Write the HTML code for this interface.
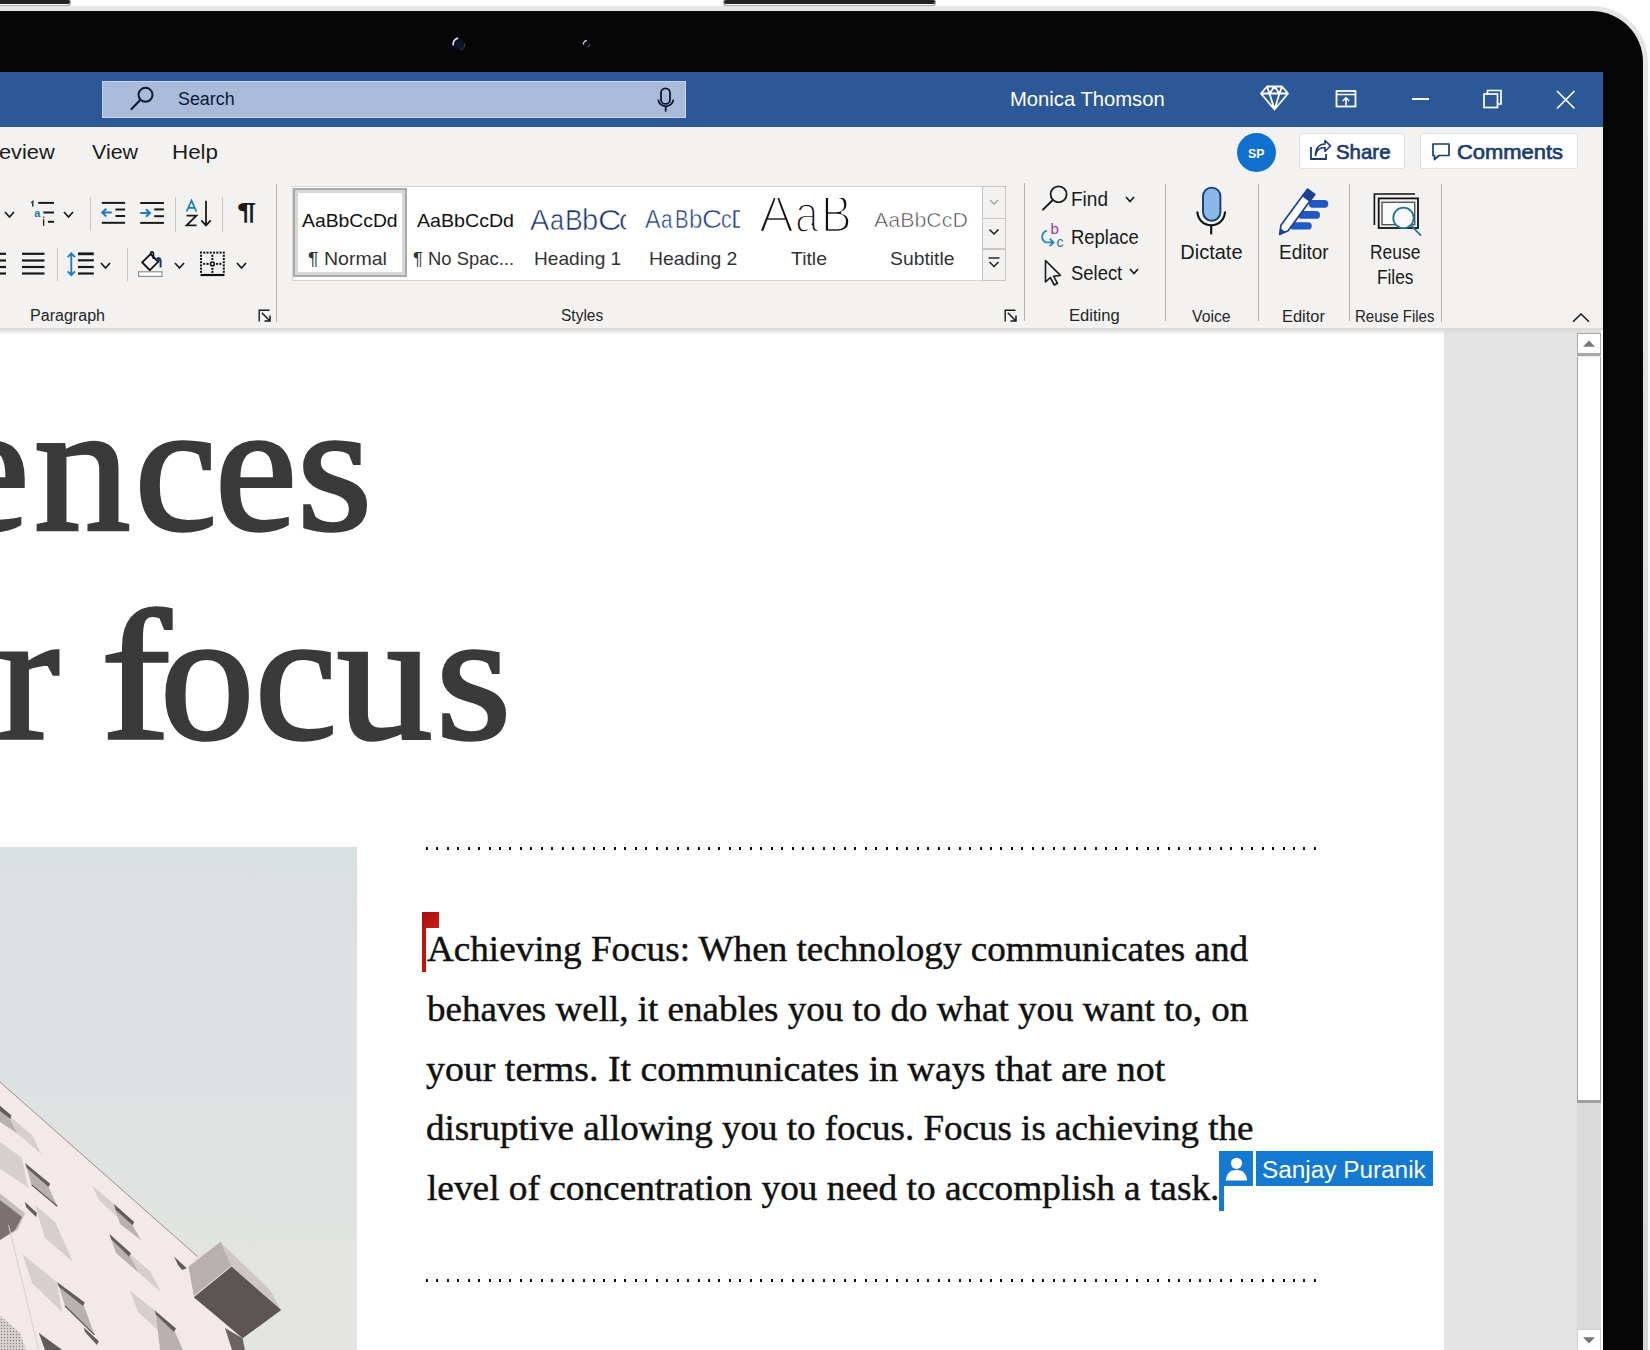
<!DOCTYPE html>
<html><head><meta charset="utf-8">
<style>
*{margin:0;padding:0;box-sizing:border-box}
html,body{width:1650px;height:1350px;overflow:hidden;background:#fff;position:relative;font-family:"Liberation Sans",sans-serif}
.a{position:absolute}
.t{position:absolute;white-space:nowrap;line-height:1}
svg{overflow:visible}
</style></head><body>
<div class="a" style="left:-5px;top:-1px;width:76px;height:7px;background:#222;border:1px solid #aaa;border-radius:0 3px 3px 0;box-shadow:inset 0 -1px 0 #fff"></div>
<div class="a" style="left:723px;top:-1px;width:213px;height:7px;background:#222;border:1px solid #aaa;border-radius:3px;box-shadow:inset 0 -1px 0 #fff"></div>
<div class="a" style="left:-60px;top:6px;width:1708px;height:1400px;background:linear-gradient(#e6e6e6,#d4d4d4);border-radius:0 56px 0 0"></div>
<div class="a" style="left:-60px;top:11px;width:1703px;height:1400px;background:#050505;border-radius:0 51px 0 0"></div>
<svg class="a" style="left:448px;top:33px;" width="22" height="22" viewBox="0 0 22 22"><circle cx="10.9" cy="10.9" r="6" fill="#0a0d1a"/><circle cx="11.5" cy="11.5" r="4" fill="#141a3a" opacity="0.6"/><path d="M5.3 12.5 A6 6 0 0 1 10.2 5.1" fill="none" stroke="#d8e8ff" stroke-width="1.6"/><path d="M16.8 10.5 A6 6 0 0 1 12 16.8" fill="none" stroke="#3a6a80" stroke-width="1" opacity="0.7"/></svg>
<svg class="a" style="left:580px;top:37px;" width="14" height="14" viewBox="0 0 14 14"><circle cx="6.6" cy="6.9" r="3.4" fill="#0a0d14"/><path d="M3.5 7.5 A3.3 3.3 0 0 1 6.8 3.6" fill="none" stroke="#e0e8f8" stroke-width="1.2"/><path d="M9.8 7 A3.3 3.3 0 0 1 7.5 10.2" fill="none" stroke="#607080" stroke-width="0.8"/></svg>
<div class="a" style="left:0px;top:72px;width:1603px;height:55px;background:#2c5898;"></div>
<div class="a" style="left:102px;top:81px;width:584px;height:37px;background:#a9bbd9;border:1px solid #c3d5f0"></div>
<svg class="a" style="left:128px;top:84px;" width="24" height="28" viewBox="0 0 24 28"><circle cx="17.5" cy="10.8" r="7" fill="none" stroke="#0d1a33" stroke-width="2"/><line x1="12.5" y1="15.8" x2="3.5" y2="25" stroke="#0d1a33" stroke-width="2.2" stroke-linecap="round"/></svg>
<div class="t" style="left:178.41px;top:90.46px;font-size:18px;font-family:'Liberation Sans',sans-serif;font-weight:400;color:#0c1a36;transform:scaleX(0.9927);transform-origin:0 0;">Search</div>
<svg class="a" style="left:655px;top:86px;" width="22" height="28" viewBox="0 0 22 28"><rect x="6" y="2.4" width="9" height="15.5" rx="4.5" fill="none" stroke="#0a1530" stroke-width="1.8"/><path d="M3.2 13.6 A7.6 7.6 0 0 0 18.3 13.6" fill="none" stroke="#0a1530" stroke-width="1.8"/><line x1="10.7" y1="21" x2="10.7" y2="25.6" stroke="#0a1530" stroke-width="1.8"/></svg>
<div class="t" style="left:1010.17px;top:88.32px;font-size:21px;font-family:'Liberation Sans',sans-serif;font-weight:400;color:#fff;transform:scaleX(0.9627);transform-origin:0 0;">Monica Thomson</div>
<svg class="a" style="left:1260px;top:85px;" width="30" height="26" viewBox="0 0 30 26"><path d="M7 1.5 H22 L28 8.5 L14.5 24.5 L1 8.5 Z M1 8.5 H28 M9.5 8.5 L14.5 24.5 L19.5 8.5 M7 1.5 L9.5 8.5 L14.5 1.5 L19.5 8.5 L22 1.5" fill="none" stroke="#fff" stroke-width="1.8" stroke-linejoin="round"/></svg>
<svg class="a" style="left:1334px;top:89px;" width="24" height="20" viewBox="0 0 24 20"><rect x="2.5" y="2" width="19" height="15.5" fill="none" stroke="#fff" stroke-width="1.8"/><line x1="2.5" y1="5.5" x2="21.5" y2="5.5" stroke="#fff" stroke-width="1.5"/><path d="M12 16.5 V9 M8.8 12 L12 8.8 L15.2 12" fill="none" stroke="#fff" stroke-width="1.6"/></svg>
<div class="a" style="left:1412px;top:98px;width:17px;height:2px;background:#fff;"></div>
<svg class="a" style="left:1482px;top:88px;" width="22" height="22" viewBox="0 0 22 22"><rect x="2" y="6" width="13.5" height="13.5" fill="none" stroke="#fff" stroke-width="1.7"/><path d="M5.5 6 V2.5 H19 V16 H15.5" fill="none" stroke="#fff" stroke-width="1.7"/></svg>
<svg class="a" style="left:1555px;top:89px;" width="22" height="22" viewBox="0 0 22 22"><path d="M2 2 L19.5 19.5 M19.5 2 L2 19.5" stroke="#fff" stroke-width="1.7"/></svg>
<div class="a" style="left:0px;top:127px;width:1603px;height:202px;background:#f3f2f1;"></div>
<div class="a" style="left:0px;top:328px;width:1603px;height:1.5px;background:#dadada;"></div>
<div class="t" style="left:-1.04px;top:141.32px;font-size:21px;font-family:'Liberation Sans',sans-serif;font-weight:400;color:#1b1b1b;transform:scaleX(1.0377);transform-origin:0 0;">eview</div>
<div class="t" style="left:91.60px;top:141.32px;font-size:21px;font-family:'Liberation Sans',sans-serif;font-weight:400;color:#1b1b1b;transform:scaleX(1.0200);transform-origin:0 0;">View</div>
<div class="t" style="left:171.67px;top:141.32px;font-size:21px;font-family:'Liberation Sans',sans-serif;font-weight:400;color:#1b1b1b;transform:scaleX(1.0659);transform-origin:0 0;">Help</div>
<div class="a" style="left:1237px;top:133px;width:39px;height:39px;border-radius:50%;background:#0f70cd"></div>
<div class="t" style="left:1247.75px;top:146.59px;font-size:13px;font-family:'Liberation Sans',sans-serif;font-weight:700;color:#fff;transform:scaleX(0.9500);transform-origin:0 0;">SP</div>
<div class="a" style="left:1298.5px;top:132.8px;width:106.5px;height:36.2px;background:#fff;border:1px solid #e1dfdd;border-radius:3px"></div>
<div class="a" style="left:1419.5px;top:132.8px;width:158px;height:36.2px;background:#fff;border:1px solid #e1dfdd;border-radius:3px"></div>
<svg class="a" style="left:1308px;top:139px;" width="24" height="22" viewBox="0 0 24 22"><path d="M3 8 V20 H18 V15" fill="none" stroke="#1c3d73" stroke-width="1.8"/><path d="M7.5 16.5 C8.5 10.5 12 8.5 17 8.5 V12.5 L22.5 6.8 L17 1.5 V5 C11 5 7.5 9.5 7.5 16.5 Z" fill="none" stroke="#1c3d73" stroke-width="1.6" stroke-linejoin="round"/></svg>
<div class="t" style="left:1335.93px;top:140.72px;font-size:21px;font-family:'Liberation Sans',sans-serif;font-weight:400;color:#1c3d73;transform:scaleX(0.9727);transform-origin:0 0;-webkit-text-stroke:0.7px #1c3d73;">Share</div>
<svg class="a" style="left:1430px;top:141px;" width="22" height="22" viewBox="0 0 22 22"><path d="M3 3 H19 V14.5 H9 L4.5 18.5 V14.5 H3 Z" fill="none" stroke="#1c3d73" stroke-width="1.7" stroke-linejoin="round"/></svg>
<div class="t" style="left:1457.15px;top:140.72px;font-size:21px;font-family:'Liberation Sans',sans-serif;font-weight:400;color:#1c3d73;transform:scaleX(1.0450);transform-origin:0 0;-webkit-text-stroke:0.7px #1c3d73;">Comments</div>
<svg class="a" style="left:3.0px;top:209.9px;" width="13" height="9" viewBox="0 0 13 9"><path d="M2 2 L6.5 7 L11 2" fill="none" stroke="#1a1a1a" stroke-width="1.7"/></svg>
<svg class="a" style="left:28px;top:198px;" width="30" height="30" viewBox="0 0 30 30"><path d="M3.2 5 L4.8 3.5 V8.5" fill="none" stroke="#1e4040" stroke-width="1.5"/><text x="6.3" y="18.8" font-family="Liberation Sans" font-weight="700" font-size="11" fill="#1a7aa8">a</text><line x1="15.6" y1="21.2" x2="15.6" y2="27.8" stroke="#1a1a1a" stroke-width="1.3"/><rect x="15" y="18.6" width="1.3" height="1.3" fill="#1a1a1a"/><line x1="10.2" y1="4.9" x2="26" y2="4.9" stroke="#1a1a1a" stroke-width="2"/><line x1="15.3" y1="14.5" x2="26" y2="14.5" stroke="#1a1a1a" stroke-width="2"/><line x1="19.9" y1="23.8" x2="26" y2="23.8" stroke="#1a1a1a" stroke-width="2"/></svg>
<svg class="a" style="left:62.0px;top:210.0px;" width="13" height="9" viewBox="0 0 13 9"><path d="M2 2 L6.5 7 L11 2" fill="none" stroke="#1a1a1a" stroke-width="1.7"/></svg>
<div class="a" style="left:90px;top:197px;width:1px;height:34px;background:#c8c6c4;"></div>
<svg class="a" style="left:100px;top:200px;" width="28" height="26" viewBox="0 0 28 26"><g stroke="#1a1a1a" stroke-width="2"><line x1="1.8" y1="2.9" x2="25.1" y2="2.9"/><line x1="15.4" y1="9.5" x2="25.1" y2="9.5"/><line x1="15.4" y1="16" x2="25.1" y2="16"/><line x1="1.8" y1="22.8" x2="25.1" y2="22.8"/></g><path d="M11.8 12.6 H2.5 M6.3 8.8 L2.3 12.6 L6.3 16.4" fill="none" stroke="#1d7ac2" stroke-width="2"/></svg>
<svg class="a" style="left:139px;top:200px;" width="28" height="26" viewBox="0 0 28 26"><g stroke="#1a1a1a" stroke-width="2"><line x1="1.2" y1="3" x2="24.9" y2="3"/><line x1="15.2" y1="9.4" x2="24.9" y2="9.4"/><line x1="15.2" y1="16.2" x2="24.9" y2="16.2"/><line x1="1.2" y1="22.9" x2="24.9" y2="22.9"/></g><path d="M1.2 13 H10.5 M7 9.2 L11 13 L7 16.8" fill="none" stroke="#1d7ac2" stroke-width="2"/></svg>
<div class="a" style="left:175px;top:197px;width:1px;height:35px;background:#c8c6c4;"></div>
<svg class="a" style="left:184px;top:198px;" width="30" height="30" viewBox="0 0 30 30"><path d="M2.6 13.5 L7.5 2.6 L12.4 13.5 M4.3 9.8 H10.7" fill="none" stroke="#1d7ac2" stroke-width="1.7"/><path d="M2.6 17.6 H12.4 L2.6 27.4 H12.6" fill="none" stroke="#1a1a1a" stroke-width="1.8"/><path d="M22 2.8 V27.2 M17.3 22.4 L22 27.4 L26.8 22.4" fill="none" stroke="#1a1a1a" stroke-width="1.8"/></svg>
<div class="a" style="left:222px;top:197px;width:1px;height:35px;background:#c8c6c4;"></div>
<div class="t" style="left:237.10px;top:201.03px;font-size:23px;font-family:'Liberation Sans',sans-serif;font-weight:700;color:#1a1a1a;transform:scaleX(1.5000);transform-origin:0 0;">&#182;</div>
<svg class="a" style="left:0px;top:251px;" width="48" height="26" viewBox="0 0 48 26"><g stroke="#1a1a1a" stroke-width="2.2"><line x1="-2" y1="2.8" x2="6" y2="2.8"/><line x1="-2" y1="9.5" x2="6" y2="9.5"/><line x1="-2" y1="16" x2="6" y2="16"/><line x1="-2" y1="22.5" x2="6" y2="22.5"/><line x1="22" y1="2.8" x2="44.5" y2="2.8"/><line x1="22" y1="9.5" x2="44.5" y2="9.5"/><line x1="22" y1="16" x2="44.5" y2="16"/><line x1="22" y1="22.5" x2="44.5" y2="22.5"/></g></svg>
<div class="a" style="left:56.5px;top:248px;width:1px;height:33px;background:#c8c6c4;"></div>
<svg class="a" style="left:65px;top:250px;" width="32" height="28" viewBox="0 0 32 28"><path d="M6.3 4 V24.5 M2.7 7.2 L6.3 3.4 L9.9 7.2 M2.7 21.3 L6.3 25.1 L9.9 21.3" fill="none" stroke="#1d7ac2" stroke-width="1.8"/><g stroke="#1a1a1a" stroke-width="2.2"><line x1="13" y1="3.8" x2="28.8" y2="3.8" stroke-width="2.8"/><line x1="13" y1="10.3" x2="28.8" y2="10.3"/><line x1="13" y1="17" x2="28.8" y2="17"/><line x1="13" y1="23.5" x2="28.8" y2="23.5"/></g></svg>
<svg class="a" style="left:99.0px;top:261.0px;" width="13" height="9" viewBox="0 0 13 9"><path d="M2 2 L6.5 7 L11 2" fill="none" stroke="#1a1a1a" stroke-width="1.7"/></svg>
<div class="a" style="left:126.5px;top:248px;width:1px;height:33px;background:#c8c6c4;"></div>
<svg class="a" style="left:136px;top:250px;" width="30" height="30" viewBox="0 0 30 30"><path d="M6.2 12.4 L14.6 4 L22.2 11.8 L13.8 20.2 Z" fill="none" stroke="#111" stroke-width="1.8" stroke-linejoin="miter"/><path d="M14.6 4 C14.6 1.2 17.4 1.2 17.4 3.6 V9" fill="none" stroke="#111" stroke-width="1.7"/><path d="M20.6 9.6 C21.8 7.2 24.6 7.8 24.6 10.6 V17.6" fill="none" stroke="#1d3d70" stroke-width="2"/><circle cx="23" cy="9.4" r="2" fill="#1d3d70"/><rect x="2.6" y="21.8" width="23.4" height="4.6" fill="#fff" stroke="#8f8f8f" stroke-width="1.2"/></svg>
<svg class="a" style="left:172.7px;top:260.8px;" width="13" height="9" viewBox="0 0 13 9"><path d="M2 2 L6.5 7 L11 2" fill="none" stroke="#1a1a1a" stroke-width="1.7"/></svg>
<svg class="a" style="left:198px;top:250px;" width="30" height="28" viewBox="0 0 30 28"><g fill="#111"><rect x="2.00" y="1.60" width="2" height="2"/><rect x="5.26" y="1.60" width="2" height="2"/><rect x="8.52" y="1.60" width="2" height="2"/><rect x="11.78" y="1.60" width="2" height="2"/><rect x="15.04" y="1.60" width="2" height="2"/><rect x="18.30" y="1.60" width="2" height="2"/><rect x="21.56" y="1.60" width="2" height="2"/><rect x="24.82" y="1.60" width="2" height="2"/><rect x="2.00" y="4.80" width="2" height="2"/><rect x="24.80" y="4.80" width="2" height="2"/><rect x="2.00" y="8.00" width="2" height="2"/><rect x="24.80" y="8.00" width="2" height="2"/><rect x="2.00" y="11.20" width="2" height="2"/><rect x="24.80" y="11.20" width="2" height="2"/><rect x="2.00" y="14.40" width="2" height="2"/><rect x="24.80" y="14.40" width="2" height="2"/><rect x="2.00" y="17.60" width="2" height="2"/><rect x="24.80" y="17.60" width="2" height="2"/><rect x="2.00" y="20.80" width="2" height="2"/><rect x="24.80" y="20.80" width="2" height="2"/><rect x="13.35" y="4.80" width="2" height="2"/><rect x="13.35" y="8.00" width="2" height="2"/><rect x="13.35" y="17.90" width="2" height="2"/><rect x="13.35" y="20.90" width="2" height="2"/><rect x="5.20" y="12.90" width="2" height="2"/><rect x="8.60" y="12.90" width="2" height="2"/><rect x="18.10" y="12.90" width="2" height="2"/><rect x="21.40" y="12.90" width="2" height="2"/></g><circle cx="14.35" cy="13.9" r="1.9" fill="none" stroke="#111" stroke-width="1.5"/><line x1="2.5" y1="25" x2="26.5" y2="25" stroke="#111" stroke-width="2.2"/></svg>
<svg class="a" style="left:235.0px;top:261.0px;" width="13" height="9" viewBox="0 0 13 9"><path d="M2 2 L6.5 7 L11 2" fill="none" stroke="#1a1a1a" stroke-width="1.7"/></svg>
<div class="t" style="left:30.30px;top:307.95px;font-size:16px;font-family:'Liberation Sans',sans-serif;font-weight:400;color:#262626;transform:scaleX(1.0041);transform-origin:0 0;">Paragraph</div>
<svg class="a" style="left:257.5px;top:308.5px;" width="14" height="14" viewBox="0 0 14 14"><path d="M1.2 12.5 V1.2 H11.5" fill="none" stroke="#1a1a1a" stroke-width="1.4"/><path d="M3.8 3.8 L12 12 M12 6.5 V12 H6.5" fill="none" stroke="#1a1a1a" stroke-width="1.5"/></svg>
<div class="a" style="left:275.5px;top:184px;width:1px;height:138px;background:#b4b2b0;"></div>
<div class="a" style="left:291.5px;top:186px;width:714px;height:95px;background:#fff;border:1px solid #d8d6d4;border-right:none"></div>
<div class="a" style="left:293px;top:188px;width:113.5px;height:88.5px;background:#fff;border:2px solid #a9a9a9;box-shadow:inset 0 0 0 3px #d7d7d7"></div>
<div class="t" style="left:301.80px;top:210.61px;font-size:19px;font-family:'Liberation Sans',sans-serif;font-weight:400;color:#111;transform:scaleX(1.0172);transform-origin:0 0;">AaBbCcDd</div>
<div class="t" style="left:307.97px;top:249.01px;font-size:19px;font-family:'Liberation Sans',sans-serif;font-weight:400;color:#333;transform:scaleX(1.0293);transform-origin:0 0;">&#182; Normal</div>
<div class="t" style="left:416.70px;top:210.61px;font-size:19px;font-family:'Liberation Sans',sans-serif;font-weight:400;color:#111;transform:scaleX(1.0323);transform-origin:0 0;">AaBbCcDd</div>
<div class="t" style="left:412.83px;top:249.01px;font-size:19px;font-family:'Liberation Sans',sans-serif;font-weight:400;color:#333;transform:scaleX(0.9696);transform-origin:0 0;">&#182; No Spac...</div>
<div class="a" style="left:528px;top:196px;width:97.6px;height:42px;overflow:hidden">
<div class="t" style="left:2.33px;top:9.10px;font-size:30px;font-family:'Liberation Sans',sans-serif;font-weight:400;color:#1b3672;transform:scaleX(0.9667);transform-origin:0 0;-webkit-text-stroke:0.6px #fff;">A</div>
<div class="t" style="left:21.81px;top:9.10px;font-size:30px;font-family:'Liberation Sans',sans-serif;font-weight:400;color:#1b3672;transform:scaleX(0.8429);transform-origin:0 0;-webkit-text-stroke:0.6px #fff;">a</div>
<div class="t" style="left:36.84px;top:9.10px;font-size:30px;font-family:'Liberation Sans',sans-serif;font-weight:400;color:#1b3672;transform:scaleX(0.8867);transform-origin:0 0;-webkit-text-stroke:0.6px #fff;">B</div>
<div class="t" style="left:54.26px;top:9.10px;font-size:30px;font-family:'Liberation Sans',sans-serif;font-weight:400;color:#1b3672;transform:scaleX(0.9692);transform-origin:0 0;-webkit-text-stroke:0.6px #fff;">b</div>
<div class="t" style="left:70.13px;top:9.10px;font-size:30px;font-family:'Liberation Sans',sans-serif;font-weight:400;color:#1b3672;transform:scaleX(1.0833);transform-origin:0 0;-webkit-text-stroke:0.6px #fff;">C</div>
<div class="t" style="left:91.23px;top:9.10px;font-size:30px;font-family:'Liberation Sans',sans-serif;font-weight:400;color:#1b3672;transform:scaleX(0.9833);transform-origin:0 0;-webkit-text-stroke:0.6px #fff;">c</div>
</div>
<div class="t" style="left:534.39px;top:249.01px;font-size:19px;font-family:'Liberation Sans',sans-serif;font-weight:400;color:#333;transform:scaleX(1.0071);transform-origin:0 0;">Heading 1</div>
<div class="a" style="left:643px;top:196px;width:97.4px;height:42px;overflow:hidden">
<div class="t" style="left:2.39px;top:10.91px;font-size:25.5px;font-family:'Liberation Sans',sans-serif;font-weight:400;color:#1f3f82;transform:scaleX(0.9125);transform-origin:0 0;-webkit-text-stroke:0.5px #fff;">A</div>
<div class="t" style="left:18.49px;top:10.91px;font-size:25.5px;font-family:'Liberation Sans',sans-serif;font-weight:400;color:#1f3f82;transform:scaleX(0.8077);transform-origin:0 0;-webkit-text-stroke:0.5px #fff;">a</div>
<div class="t" style="left:31.60px;top:10.91px;font-size:25.5px;font-family:'Liberation Sans',sans-serif;font-weight:400;color:#1f3f82;transform:scaleX(0.8000);transform-origin:0 0;-webkit-text-stroke:0.5px #fff;">B</div>
<div class="t" style="left:46.01px;top:10.91px;font-size:25.5px;font-family:'Liberation Sans',sans-serif;font-weight:400;color:#1f3f82;transform:scaleX(0.9455);transform-origin:0 0;-webkit-text-stroke:0.5px #fff;">b</div>
<div class="t" style="left:59.31px;top:10.91px;font-size:25.5px;font-family:'Liberation Sans',sans-serif;font-weight:400;color:#1f3f82;transform:scaleX(1.0875);transform-origin:0 0;-webkit-text-stroke:0.5px #fff;">C</div>
<div class="t" style="left:78.37px;top:10.91px;font-size:25.5px;font-family:'Liberation Sans',sans-serif;font-weight:400;color:#1f3f82;transform:scaleX(0.8273);transform-origin:0 0;-webkit-text-stroke:0.5px #fff;">c</div>
<div class="t" style="left:88.32px;top:10.91px;font-size:25.5px;font-family:'Liberation Sans',sans-serif;font-weight:400;color:#1f3f82;transform:scaleX(1.0400);transform-origin:0 0;-webkit-text-stroke:0.5px #fff;">D</div>
</div>
<div class="t" style="left:648.98px;top:249.01px;font-size:19px;font-family:'Liberation Sans',sans-serif;font-weight:400;color:#333;transform:scaleX(1.0200);transform-origin:0 0;">Heading 2</div>
<div class="a" style="left:752px;top:198px;width:105px;height:40px;overflow:hidden">
<div class="t" style="left:6.97px;top:-12.22px;font-size:54px;font-family:'Liberation Sans',sans-serif;font-weight:400;color:#111;transform:scaleX(0.9656);transform-origin:0 0;-webkit-text-stroke:2.4px #fff;">A</div>
<div class="t" style="left:42.96px;top:-12.22px;font-size:54px;font-family:'Liberation Sans',sans-serif;font-weight:400;color:#111;transform:scaleX(0.7808);transform-origin:0 0;-webkit-text-stroke:2.4px #fff;">a</div>
<div class="t" style="left:68.88px;top:-12.22px;font-size:54px;font-family:'Liberation Sans',sans-serif;font-weight:400;color:#111;transform:scaleX(0.8538);transform-origin:0 0;-webkit-text-stroke:2.4px #fff;">B</div>
</div>
<div class="t" style="left:790.80px;top:249.01px;font-size:19px;font-family:'Liberation Sans',sans-serif;font-weight:400;color:#333;transform:scaleX(1.0206);transform-origin:0 0;">Title</div>
<div class="t" style="left:874.43px;top:210.37px;font-size:20px;font-family:'Liberation Sans',sans-serif;font-weight:400;color:#444;transform:scaleX(1.0698);transform-origin:0 0;-webkit-text-stroke:0.6px #fff;">AaBbCcD</div>
<div class="t" style="left:889.58px;top:249.01px;font-size:19px;font-family:'Liberation Sans',sans-serif;font-weight:400;color:#333;transform:scaleX(1.0177);transform-origin:0 0;">Subtitle</div>
<div class="a" style="left:982px;top:186px;width:23.5px;height:95px;background:#f3f2f1;border:1px solid #c8c6c4"></div>
<div class="a" style="left:982px;top:217.5px;width:23.5px;height:1.5px;background:#c8c6c4;"></div>
<div class="a" style="left:982px;top:248px;width:23.5px;height:1.5px;background:#c8c6c4;"></div>
<svg class="a" style="left:987.8px;top:197.5px;" width="12" height="8" viewBox="0 0 12 8"><path d="M2 2 L6.0 6 L10 2" fill="none" stroke="#a0a0a0" stroke-width="1.3"/></svg>
<svg class="a" style="left:988px;top:228px;" width="12" height="8" viewBox="0 0 12 8"><path d="M1.5 1.5 L6 6 L10.5 1.5" fill="none" stroke="#1a1a1a" stroke-width="1.5"/></svg>
<svg class="a" style="left:987px;top:256px;" width="14" height="14" viewBox="0 0 14 14"><line x1="1.5" y1="2" x2="12.5" y2="2" stroke="#1a1a1a" stroke-width="1.4"/><path d="M2.5 6 L7 10.5 L11.5 6" fill="none" stroke="#1a1a1a" stroke-width="1.5"/></svg>
<div class="t" style="left:560.63px;top:307.75px;font-size:16px;font-family:'Liberation Sans',sans-serif;font-weight:400;color:#262626;transform:scaleX(0.9690);transform-origin:0 0;">Styles</div>
<svg class="a" style="left:1004px;top:308.5px;" width="14" height="14" viewBox="0 0 14 14"><path d="M1.2 12.5 V1.2 H11.5" fill="none" stroke="#1a1a1a" stroke-width="1.4"/><path d="M3.8 3.8 L12 12 M12 6.5 V12 H6.5" fill="none" stroke="#1a1a1a" stroke-width="1.5"/></svg>
<div class="a" style="left:1023.5px;top:183px;width:1px;height:138px;background:#b4b2b0;"></div>
<svg class="a" style="left:1040px;top:184px;" width="30" height="30" viewBox="0 0 30 30"><circle cx="18.6" cy="10.3" r="8" fill="none" stroke="#1a1a1a" stroke-width="1.8"/><line x1="12.8" y1="16" x2="3" y2="25.6" stroke="#1a1a1a" stroke-width="2" stroke-linecap="round"/></svg>
<div class="t" style="left:1071.35px;top:188.77px;font-size:20px;font-family:'Liberation Sans',sans-serif;font-weight:400;color:#1a1a1a;transform:scaleX(0.9514);transform-origin:0 0;">Find</div>
<svg class="a" style="left:1124.2px;top:194.65px;" width="12" height="8.5" viewBox="0 0 12 8.5"><path d="M2 2 L6.0 6.5 L10 2" fill="none" stroke="#1a1a1a" stroke-width="1.7"/></svg>
<svg class="a" style="left:1040px;top:220px;" width="28" height="30" viewBox="0 0 28 30"><text x="10.6" y="14.3" font-family="Liberation Sans" font-size="15" fill="#9a3a9a">b</text><text x="16.6" y="26.8" font-family="Liberation Sans" font-size="14" fill="#2a7090">c</text><path d="M6.8 10.6 C1.2 12.6 0.6 19.6 5.6 22.4 L13.4 22.4 M9.8 18.8 L13.6 22.4 L9.8 26" fill="none" stroke="#2a88c0" stroke-width="1.9"/></svg>
<div class="t" style="left:1071.38px;top:226.87px;font-size:20px;font-family:'Liberation Sans',sans-serif;font-weight:400;color:#1a1a1a;transform:scaleX(0.9222);transform-origin:0 0;">Replace</div>
<svg class="a" style="left:1042px;top:258px;" width="24" height="30" viewBox="0 0 24 30"><path d="M3.5 2.5 V24 L8.3 19.5 L12.3 27 L15.5 25.3 L11.6 18.2 L18.4 17.4 Z" fill="none" stroke="#1a1a1a" stroke-width="1.6" stroke-linejoin="round"/></svg>
<div class="t" style="left:1071.38px;top:262.57px;font-size:20px;font-family:'Liberation Sans',sans-serif;font-weight:400;color:#1a1a1a;transform:scaleX(0.9218);transform-origin:0 0;">Select</div>
<svg class="a" style="left:1128.0px;top:267.05px;" width="12" height="8.5" viewBox="0 0 12 8.5"><path d="M2 2 L6.0 6.5 L10 2" fill="none" stroke="#1a1a1a" stroke-width="1.7"/></svg>
<div class="t" style="left:1069.46px;top:307.75px;font-size:16px;font-family:'Liberation Sans',sans-serif;font-weight:400;color:#262626;transform:scaleX(1.0362);transform-origin:0 0;">Editing</div>
<div class="a" style="left:1164.5px;top:184px;width:1px;height:137px;background:#b4b2b0;"></div>
<svg class="a" style="left:1192px;top:184px;" width="40" height="54" viewBox="0 0 40 54"><rect x="11" y="3.6" width="17.4" height="33.2" rx="8.7" fill="#8bb8e8" stroke="#123f75" stroke-width="1.9"/><path d="M5.4 27.4 A13.8 13.8 0 0 0 33 27.4" fill="none" stroke="#111" stroke-width="2.1"/><line x1="19.2" y1="41.2" x2="19.2" y2="50.4" stroke="#111" stroke-width="2.1"/></svg>
<div class="t" style="left:1180.30px;top:242.27px;font-size:20px;font-family:'Liberation Sans',sans-serif;font-weight:400;color:#1a1a1a;">Dictate</div>
<div class="t" style="left:1191.50px;top:308.75px;font-size:16px;font-family:'Liberation Sans',sans-serif;font-weight:400;color:#262626;transform:scaleX(0.9846);transform-origin:0 0;">Voice</div>
<div class="a" style="left:1257.5px;top:184px;width:1px;height:137px;background:#b4b2b0;"></div>
<svg class="a" style="left:1274px;top:182px;" width="60" height="58" viewBox="0 0 60 58"><g fill="#2159c4"><rect x="34.8" y="17.9" width="19.5" height="7.8" rx="3.9"/><rect x="24" y="29" width="22" height="7.8" rx="3.9"/><rect x="16" y="40.2" width="21.7" height="7.3" rx="3.6"/></g><path d="M5.7 52.4 L6.9 43.3 L28.8 13.5 L36 18.9 L14.1 48.7 Z" fill="#fff" stroke="#1d3f94" stroke-width="1.7" stroke-linejoin="round"/><path d="M28.8 13.5 L33.6 7.1 L40.8 12.5 L36 18.9 Z" fill="#1d3f94" stroke="#1d3f94" stroke-width="1.6" stroke-linejoin="round"/><path d="M5.2 53 L6.4 46.2 L11.2 49.8 Z" fill="#1d3f94"/></svg>
<div class="t" style="left:1279.05px;top:242.27px;font-size:20px;font-family:'Liberation Sans',sans-serif;font-weight:400;color:#1a1a1a;transform:scaleX(0.9510);transform-origin:0 0;">Editor</div>
<div class="t" style="left:1282.17px;top:308.75px;font-size:16px;font-family:'Liberation Sans',sans-serif;font-weight:400;color:#262626;transform:scaleX(1.0268);transform-origin:0 0;">Editor</div>
<div class="a" style="left:1349.3px;top:184px;width:1px;height:137px;background:#b4b2b0;"></div>
<svg class="a" style="left:1370px;top:190px;" width="54" height="50" viewBox="0 0 54 50"><path d="M4.4 35.1 V4 H45.1" fill="none" stroke="#111" stroke-width="1.6"/><rect x="8.7" y="8.4" width="39.3" height="29.6" fill="#f3f2f1" stroke="#111" stroke-width="1.8"/><rect x="12" y="12.3" width="32.7" height="22.4" fill="#f8f8f8" stroke="#555" stroke-width="1.4"/><circle cx="33.5" cy="27.9" r="10.2" fill="#f8f8f8" stroke="#1f7898" stroke-width="1.8"/><line x1="40.8" y1="35.2" x2="51" y2="45.6" stroke="#1f7898" stroke-width="1.8"/></svg>
<div class="t" style="left:1370.33px;top:242.27px;font-size:20px;font-family:'Liberation Sans',sans-serif;font-weight:400;color:#1a1a1a;transform:scaleX(0.8714);transform-origin:0 0;">Reuse</div>
<div class="t" style="left:1377.14px;top:267.27px;font-size:20px;font-family:'Liberation Sans',sans-serif;font-weight:400;color:#1a1a1a;transform:scaleX(0.8610);transform-origin:0 0;">Files</div>
<div class="t" style="left:1355.06px;top:308.75px;font-size:16px;font-family:'Liberation Sans',sans-serif;font-weight:400;color:#262626;transform:scaleX(0.9410);transform-origin:0 0;">Reuse Files</div>
<div class="a" style="left:1441.3px;top:184px;width:1px;height:138px;background:#b4b2b0;"></div>
<svg class="a" style="left:1571px;top:311px;" width="20" height="14" viewBox="0 0 20 14"><path d="M2 10.8 L10 3 L18 10.8" fill="none" stroke="#1a1a1a" stroke-width="1.6"/></svg>
<div class="a" style="left:0px;top:330px;width:1444px;height:1020px;background:#fff;"></div>
<div class="a" style="left:1444px;top:330px;width:159px;height:1020px;background:#e4e4e4;"></div>
<div class="a" style="left:0;top:329.5px;width:1603px;height:5px;background:linear-gradient(rgba(215,218,218,0.8),rgba(230,230,230,0))"></div>
<div class="a" style="left:1577px;top:332.5px;width:24px;height:23.5px;background:#fff;border:1px solid #a8a8a8;border-bottom:3px solid #a8a8a8"></div>
<svg class="a" style="left:1582px;top:339px;" width="14" height="9" viewBox="0 0 14 9"><path d="M1 7.8 L7 1.6 L13 7.8 Z" fill="#777"/></svg>
<div class="a" style="left:1577px;top:357px;width:24px;height:746px;background:#fff;border:1px solid #a0a0a0;border-bottom:3px solid #a0a0a0;border-top:none"></div>
<div class="a" style="left:1577px;top:1103px;width:24px;height:226px;background:#dadada;"></div>
<div class="a" style="left:1577px;top:1329px;width:24px;height:21px;background:#fff;border:1px solid #cfcfcf;border-bottom:none"></div>
<svg class="a" style="left:1582px;top:1336px;" width="14" height="9" viewBox="0 0 14 9"><path d="M1 1.2 L7 7.6 L13 1.2 Z" fill="#777"/></svg>
<div class="a" style="left:1601px;top:330px;width:2px;height:1020px;background:#fff;"></div>
<svg class="a" style="left:0px;top:847px;overflow:hidden" width="357" height="503" viewBox="0 0 357 503"><defs><linearGradient id="sky" x1="0" y1="0" x2="0" y2="1"><stop offset="0" stop-color="#dbe0e3"/><stop offset="0.5" stop-color="#dfe2e2"/><stop offset="1" stop-color="#e4e5e1"/></linearGradient><pattern id="perf" width="3" height="3" patternUnits="userSpaceOnUse"><rect width="3" height="3" fill="#d9d0d0"/><circle cx="1.5" cy="1.5" r="0.7" fill="#8a8282"/></pattern></defs><rect x="0" y="0" width="357" height="503" fill="url(#sky)"/><polygon points="0.0,235.0 197.5,409.5 188.5,419.7 193.9,448.8 242.6,491.3 245.0,503.0 0.0,503.0" fill="#f3e9e8" /><line x1="0" y1="235" x2="197.5" y2="409.5" stroke="#8d8585" stroke-width="0.9"/><polygon points="9.8,269.2 32.7,288.8 41.5,307.4 17.5,286.6" fill="#d6cfcf" /><polygon points="0.0,295.0 21.8,310.6 28.4,341.0 0.0,321.5" fill="#d6cfcf" /><polygon points="92.2,338.5 114.5,357.5 121.0,373.0 99.0,353.0" fill="#d6cfcf" /><polygon points="128.8,406.3 150.0,424.0 161.0,445.0 139.0,426.0" fill="#d6cfcf" /><polygon points="22.5,407.3 57.0,435.2 62.3,465.3 32.2,436.3" fill="#d6cfcf" /><polygon points="130.0,443.8 154.6,463.2 160.0,485.0 138.0,465.0" fill="#d6cfcf" /><polygon points="35.0,358.0 55.0,375.0 73.0,415.0 45.0,391.0" fill="#d6cfcf" /><polygon points="0.0,264.3 10.4,271.9 17.5,286.6 0.0,275.0" fill="#b8b0b1" /><polygon points="26.7,321.0 48.5,340.1 57.3,359.2 31.6,337.9" fill="#b8b0b1" /><polygon points="115.6,363.0 132.5,378.3 141.0,393.0 120.0,377.0" fill="#b8b0b1" /><polygon points="111.0,392.0 130.0,409.0 139.0,426.0 116.0,406.0" fill="#b8b0b1" /><polygon points="59.0,440.0 84.0,459.0 94.5,487.9 65.0,459.0" fill="#b8b0b1" /><polygon points="156.0,468.0 175.0,485.0 183.0,503.0 160.0,503.0" fill="#b8b0b1" /><polygon points="0.0,258.8 11.5,268.6 10.4,271.9 0.0,264.3" fill="#635c5d" /><polygon points="25.1,316.1 50.2,336.8 48.5,340.1 26.7,321.0" fill="#635c5d" /><polygon points="114.0,357.0 134.2,375.0 132.5,378.3 115.6,363.0" fill="#635c5d" /><polygon points="109.5,387.0 131.0,406.3 129.0,409.5 111.0,392.0" fill="#635c5d" /><polygon points="57.0,435.0 84.8,455.6 83.0,459.0 59.0,440.0" fill="#635c5d" /><polygon points="154.6,463.2 176.0,481.4 174.0,485.0 156.0,468.0" fill="#635c5d" /><polygon points="83.7,480.3 98.8,494.3 97.0,498.0 85.0,485.0" fill="#635c5d" /><polygon points="38.7,485.7 62.3,503.0 45.0,503.0" fill="#635c5d" /><polygon points="25.0,355.0 37.0,366.0 36.0,370.0 26.0,360.0" fill="#635c5d" /><polygon points="174.0,409.5 186.8,421.3 182.0,423.0 178.0,418.0" fill="#635c5d" /><line x1="31.6" y1="337.9000000000001" x2="57.3" y2="359.20000000000005" stroke="#5a5354" stroke-width="1.2"/><line x1="65" y1="459" x2="94.5" y2="487.9000000000001" stroke="#5a5354" stroke-width="1.2"/><polygon points="0.0,346.6 25.1,366.3 17.5,383.0 0.0,393.0" fill="#c5bdbc" /><polygon points="0.0,353.0 22.0,370.0 15.0,383.0 0.0,393.0" fill="#7a7170" /><polygon points="0.0,468.5 20.0,486.0 25.8,503.0 0.0,503.0" fill="url(#perf)" /><line x1="8.6" y1="378.29999999999995" x2="38.7" y2="503" stroke="#d8cfcf" stroke-width="1"/><polygon points="188.5,419.7 220.6,394.8 231.5,418.5 193.9,448.8" fill="#b8b0ae" /><polygon points="220.5,395.2 270.0,443.0 281.2,463.0 231.6,419.6" fill="#cdc7c5" /><polygon points="193.8,450.3 231.6,419.6 281.2,463.0 242.6,491.3" fill="#5c5455" /><polygon points="225.0,481.0 242.6,491.3 245.0,503.0 232.0,503.0" fill="#6b6464" /></svg>
<div class="t" style="left:-52.80px;top:373.88px;font-size:185px;font-family:'Liberation Serif',serif;font-weight:400;color:#3a3a3a;-webkit-text-stroke:3.5px #3a3a3a;">e</div>
<div class="t" style="left:33.92px;top:373.88px;font-size:185px;font-family:'Liberation Serif',serif;font-weight:400;color:#3a3a3a;transform:scaleX(1.0411);transform-origin:0 0;-webkit-text-stroke:3.5px #3a3a3a;">n</div>
<div class="t" style="left:134.81px;top:373.88px;font-size:185px;font-family:'Liberation Serif',serif;font-weight:400;color:#3a3a3a;-webkit-text-stroke:3.5px #3a3a3a;">c</div>
<div class="t" style="left:215.02px;top:373.88px;font-size:185px;font-family:'Liberation Serif',serif;font-weight:400;color:#3a3a3a;transform:scaleX(0.9959);transform-origin:0 0;-webkit-text-stroke:3.5px #3a3a3a;">e</div>
<div class="t" style="left:297.33px;top:373.88px;font-size:185px;font-family:'Liberation Serif',serif;font-weight:400;color:#3a3a3a;transform:scaleX(1.0443);transform-origin:0 0;-webkit-text-stroke:3.5px #3a3a3a;">s</div>
<div class="t" style="left:-2.30px;top:582.98px;font-size:185px;font-family:'Liberation Serif',serif;font-weight:400;color:#3a3a3a;-webkit-text-stroke:3.5px #3a3a3a;">r</div>
<div class="t" style="left:101.28px;top:582.98px;font-size:185px;font-family:'Liberation Serif',serif;font-weight:400;color:#3a3a3a;transform:scaleX(1.1305);transform-origin:0 0;-webkit-text-stroke:3.5px #3a3a3a;">f</div>
<div class="t" style="left:160.41px;top:582.98px;font-size:185px;font-family:'Liberation Serif',serif;font-weight:400;color:#3a3a3a;transform:scaleX(1.0183);transform-origin:0 0;-webkit-text-stroke:3.5px #3a3a3a;">o</div>
<div class="t" style="left:255.02px;top:582.98px;font-size:185px;font-family:'Liberation Serif',serif;font-weight:400;color:#3a3a3a;transform:scaleX(0.9959);transform-origin:0 0;-webkit-text-stroke:3.5px #3a3a3a;">c</div>
<div class="t" style="left:337.17px;top:582.98px;font-size:185px;font-family:'Liberation Serif',serif;font-weight:400;color:#3a3a3a;transform:scaleX(1.0300);transform-origin:0 0;-webkit-text-stroke:3.5px #3a3a3a;">u</div>
<div class="t" style="left:435.53px;top:582.98px;font-size:185px;font-family:'Liberation Serif',serif;font-weight:400;color:#3a3a3a;transform:scaleX(1.0443);transform-origin:0 0;-webkit-text-stroke:3.5px #3a3a3a;">s</div>
<svg class="a" style="left:420px;top:844px;" width="910" height="10" viewBox="0 0 910 10"><g fill="#111"><rect x="6" y="3" width="2" height="3"/><rect x="16" y="3" width="2" height="3"/><rect x="27" y="3" width="2" height="3"/><rect x="37" y="3" width="2" height="3"/><rect x="48" y="3" width="2" height="3"/><rect x="58" y="3" width="2" height="3"/><rect x="69" y="3" width="2" height="3"/><rect x="79" y="3" width="2" height="3"/><rect x="89" y="3" width="2" height="3"/><rect x="100" y="3" width="2" height="3"/><rect x="110" y="3" width="2" height="3"/><rect x="121" y="3" width="2" height="3"/><rect x="131" y="3" width="2" height="3"/><rect x="142" y="3" width="2" height="3"/><rect x="152" y="3" width="2" height="3"/><rect x="163" y="3" width="2" height="3"/><rect x="173" y="3" width="2" height="3"/><rect x="183" y="3" width="2" height="3"/><rect x="194" y="3" width="2" height="3"/><rect x="204" y="3" width="2" height="3"/><rect x="215" y="3" width="2" height="3"/><rect x="225" y="3" width="2" height="3"/><rect x="236" y="3" width="2" height="3"/><rect x="246" y="3" width="2" height="3"/><rect x="257" y="3" width="2" height="3"/><rect x="267" y="3" width="2" height="3"/><rect x="278" y="3" width="2" height="3"/><rect x="288" y="3" width="2" height="3"/><rect x="298" y="3" width="2" height="3"/><rect x="309" y="3" width="2" height="3"/><rect x="319" y="3" width="2" height="3"/><rect x="330" y="3" width="2" height="3"/><rect x="340" y="3" width="2" height="3"/><rect x="351" y="3" width="2" height="3"/><rect x="361" y="3" width="2" height="3"/><rect x="372" y="3" width="2" height="3"/><rect x="382" y="3" width="2" height="3"/><rect x="392" y="3" width="2" height="3"/><rect x="403" y="3" width="2" height="3"/><rect x="413" y="3" width="2" height="3"/><rect x="424" y="3" width="2" height="3"/><rect x="434" y="3" width="2" height="3"/><rect x="445" y="3" width="2" height="3"/><rect x="455" y="3" width="2" height="3"/><rect x="466" y="3" width="2" height="3"/><rect x="476" y="3" width="2" height="3"/><rect x="486" y="3" width="2" height="3"/><rect x="497" y="3" width="2" height="3"/><rect x="507" y="3" width="2" height="3"/><rect x="518" y="3" width="2" height="3"/><rect x="528" y="3" width="2" height="3"/><rect x="539" y="3" width="2" height="3"/><rect x="549" y="3" width="2" height="3"/><rect x="560" y="3" width="2" height="3"/><rect x="570" y="3" width="2" height="3"/><rect x="580" y="3" width="2" height="3"/><rect x="591" y="3" width="2" height="3"/><rect x="601" y="3" width="2" height="3"/><rect x="612" y="3" width="2" height="3"/><rect x="622" y="3" width="2" height="3"/><rect x="633" y="3" width="2" height="3"/><rect x="643" y="3" width="2" height="3"/><rect x="654" y="3" width="2" height="3"/><rect x="664" y="3" width="2" height="3"/><rect x="675" y="3" width="2" height="3"/><rect x="685" y="3" width="2" height="3"/><rect x="695" y="3" width="2" height="3"/><rect x="706" y="3" width="2" height="3"/><rect x="716" y="3" width="2" height="3"/><rect x="727" y="3" width="2" height="3"/><rect x="737" y="3" width="2" height="3"/><rect x="748" y="3" width="2" height="3"/><rect x="758" y="3" width="2" height="3"/><rect x="769" y="3" width="2" height="3"/><rect x="779" y="3" width="2" height="3"/><rect x="789" y="3" width="2" height="3"/><rect x="800" y="3" width="2" height="3"/><rect x="810" y="3" width="2" height="3"/><rect x="821" y="3" width="2" height="3"/><rect x="831" y="3" width="2" height="3"/><rect x="842" y="3" width="2" height="3"/><rect x="852" y="3" width="2" height="3"/><rect x="863" y="3" width="2" height="3"/><rect x="873" y="3" width="2" height="3"/><rect x="883" y="3" width="2" height="3"/><rect x="894" y="3" width="2" height="3"/></g></svg>
<svg class="a" style="left:420px;top:1276px;" width="910" height="10" viewBox="0 0 910 10"><g fill="#111"><rect x="6" y="3" width="2" height="3"/><rect x="16" y="3" width="2" height="3"/><rect x="27" y="3" width="2" height="3"/><rect x="37" y="3" width="2" height="3"/><rect x="48" y="3" width="2" height="3"/><rect x="58" y="3" width="2" height="3"/><rect x="69" y="3" width="2" height="3"/><rect x="79" y="3" width="2" height="3"/><rect x="89" y="3" width="2" height="3"/><rect x="100" y="3" width="2" height="3"/><rect x="110" y="3" width="2" height="3"/><rect x="121" y="3" width="2" height="3"/><rect x="131" y="3" width="2" height="3"/><rect x="142" y="3" width="2" height="3"/><rect x="152" y="3" width="2" height="3"/><rect x="163" y="3" width="2" height="3"/><rect x="173" y="3" width="2" height="3"/><rect x="183" y="3" width="2" height="3"/><rect x="194" y="3" width="2" height="3"/><rect x="204" y="3" width="2" height="3"/><rect x="215" y="3" width="2" height="3"/><rect x="225" y="3" width="2" height="3"/><rect x="236" y="3" width="2" height="3"/><rect x="246" y="3" width="2" height="3"/><rect x="257" y="3" width="2" height="3"/><rect x="267" y="3" width="2" height="3"/><rect x="278" y="3" width="2" height="3"/><rect x="288" y="3" width="2" height="3"/><rect x="298" y="3" width="2" height="3"/><rect x="309" y="3" width="2" height="3"/><rect x="319" y="3" width="2" height="3"/><rect x="330" y="3" width="2" height="3"/><rect x="340" y="3" width="2" height="3"/><rect x="351" y="3" width="2" height="3"/><rect x="361" y="3" width="2" height="3"/><rect x="372" y="3" width="2" height="3"/><rect x="382" y="3" width="2" height="3"/><rect x="392" y="3" width="2" height="3"/><rect x="403" y="3" width="2" height="3"/><rect x="413" y="3" width="2" height="3"/><rect x="424" y="3" width="2" height="3"/><rect x="434" y="3" width="2" height="3"/><rect x="445" y="3" width="2" height="3"/><rect x="455" y="3" width="2" height="3"/><rect x="466" y="3" width="2" height="3"/><rect x="476" y="3" width="2" height="3"/><rect x="486" y="3" width="2" height="3"/><rect x="497" y="3" width="2" height="3"/><rect x="507" y="3" width="2" height="3"/><rect x="518" y="3" width="2" height="3"/><rect x="528" y="3" width="2" height="3"/><rect x="539" y="3" width="2" height="3"/><rect x="549" y="3" width="2" height="3"/><rect x="560" y="3" width="2" height="3"/><rect x="570" y="3" width="2" height="3"/><rect x="580" y="3" width="2" height="3"/><rect x="591" y="3" width="2" height="3"/><rect x="601" y="3" width="2" height="3"/><rect x="612" y="3" width="2" height="3"/><rect x="622" y="3" width="2" height="3"/><rect x="633" y="3" width="2" height="3"/><rect x="643" y="3" width="2" height="3"/><rect x="654" y="3" width="2" height="3"/><rect x="664" y="3" width="2" height="3"/><rect x="675" y="3" width="2" height="3"/><rect x="685" y="3" width="2" height="3"/><rect x="695" y="3" width="2" height="3"/><rect x="706" y="3" width="2" height="3"/><rect x="716" y="3" width="2" height="3"/><rect x="727" y="3" width="2" height="3"/><rect x="737" y="3" width="2" height="3"/><rect x="748" y="3" width="2" height="3"/><rect x="758" y="3" width="2" height="3"/><rect x="769" y="3" width="2" height="3"/><rect x="779" y="3" width="2" height="3"/><rect x="789" y="3" width="2" height="3"/><rect x="800" y="3" width="2" height="3"/><rect x="810" y="3" width="2" height="3"/><rect x="821" y="3" width="2" height="3"/><rect x="831" y="3" width="2" height="3"/><rect x="842" y="3" width="2" height="3"/><rect x="852" y="3" width="2" height="3"/><rect x="863" y="3" width="2" height="3"/><rect x="873" y="3" width="2" height="3"/><rect x="883" y="3" width="2" height="3"/><rect x="894" y="3" width="2" height="3"/></g></svg>
<div class="t" style="left:427.30px;top:930.75px;font-size:36px;font-family:'Liberation Serif',serif;font-weight:400;color:#111;transform:scaleX(1.0313);transform-origin:0 0;-webkit-text-stroke:0.45px #111;">Achieving Focus: When technology communicates and</div>
<div class="t" style="left:427.00px;top:990.75px;font-size:36px;font-family:'Liberation Serif',serif;font-weight:400;color:#111;transform:scaleX(1.0282);transform-origin:0 0;-webkit-text-stroke:0.45px #111;">behaves well, it enables you to do what you want to, on</div>
<div class="t" style="left:426.40px;top:1050.75px;font-size:36px;font-family:'Liberation Serif',serif;font-weight:400;color:#111;transform:scaleX(1.0518);transform-origin:0 0;-webkit-text-stroke:0.45px #111;">your terms. It communicates in ways that are not</div>
<div class="t" style="left:426.27px;top:1110.35px;font-size:36px;font-family:'Liberation Serif',serif;font-weight:400;color:#111;transform:scaleX(1.0279);transform-origin:0 0;-webkit-text-stroke:0.45px #111;">disruptive allowing you to focus. Focus is achieving the</div>
<div class="t" style="left:426.70px;top:1170.35px;font-size:36px;font-family:'Liberation Serif',serif;font-weight:400;color:#111;transform:scaleX(1.0362);transform-origin:0 0;-webkit-text-stroke:0.45px #111;">level of concentration you need to accomplish a task.</div>
<div class="a" style="left:422.4px;top:912.4px;width:3.6px;height:59.4px;background:#c0140f;"></div>
<div class="a" style="left:422.4px;top:912.4px;width:16.3px;height:15.8px;background:linear-gradient(135deg,#a01010,#d01a10);"></div>
<div class="a" style="left:1219px;top:1151px;width:4.6px;height:60px;background:#1479d0;"></div>
<div class="a" style="left:1219px;top:1151px;width:34px;height:34.5px;background:#1479d0;"></div>
<svg class="a" style="left:1224px;top:1154px;" width="26" height="30" viewBox="0 0 26 30"><circle cx="12.5" cy="9.3" r="5.6" fill="#fff"/><path d="M1.9 26.6 C2.4 19 6.5 16 12.5 16 C18.5 16 22.6 19 23.1 26.6 Z" fill="#fff"/></svg>
<div class="a" style="left:1256px;top:1151px;width:177px;height:34.5px;background:#1479d0;"></div>
<div class="t" style="left:1261.94px;top:1158.53px;font-size:23px;font-family:'Liberation Sans',sans-serif;font-weight:400;color:#fff;transform:scaleX(1.0584);transform-origin:0 0;">Sanjay Puranik</div>
</body></html>
